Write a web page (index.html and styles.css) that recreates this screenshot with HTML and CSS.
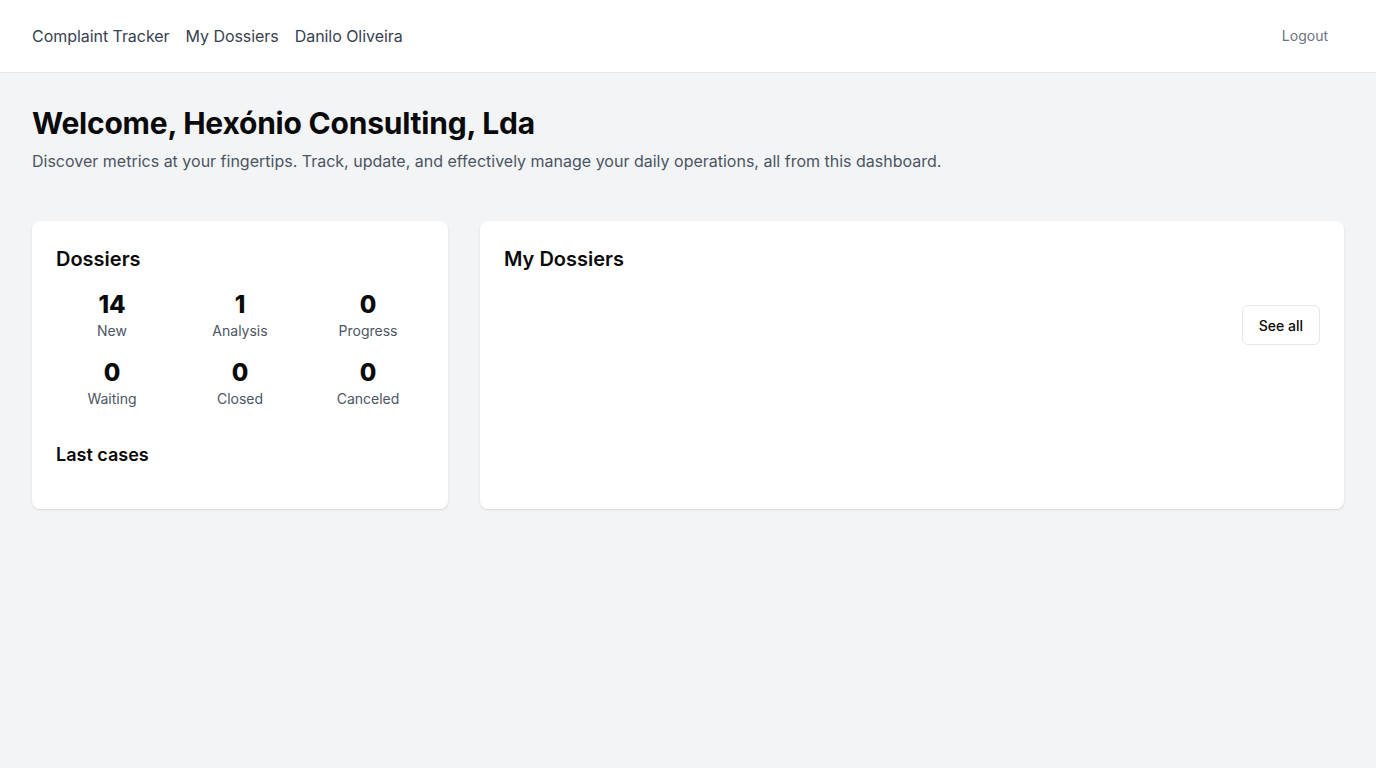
FILE: index.html
```html
<!DOCTYPE html>
<html lang="en">
<head>
<meta charset="utf-8">
<title>Complaint Tracker</title>
<link rel="stylesheet" href="styles.css">
</head>
<body>
<header class="topbar">
  <nav class="nav-links">
    <a href="#" class="nav-link">Complaint Tracker</a>
    <a href="#" class="nav-link">My Dossiers</a>
    <a href="#" class="nav-link">Danilo Oliveira</a>
  </nav>
  <button class="logout">Logout</button>
</header>
<main class="main">
  <h1 class="title">Welcome, Hexónio Consulting, Lda</h1>
  <p class="subtitle">Discover metrics at your fingertips. Track, update, and effectively manage your daily operations, all from this dashboard.</p>
  <section class="cards">
    <div class="card card-left">
      <h2 class="card-title">Dossiers</h2>
      <div class="stats">
        <div class="stat"><div class="stat-num">14</div><div class="stat-label">New</div></div>
        <div class="stat"><div class="stat-num">1</div><div class="stat-label">Analysis</div></div>
        <div class="stat"><div class="stat-num">0</div><div class="stat-label">Progress</div></div>
        <div class="stat"><div class="stat-num">0</div><div class="stat-label">Waiting</div></div>
        <div class="stat"><div class="stat-num">0</div><div class="stat-label">Closed</div></div>
        <div class="stat"><div class="stat-num">0</div><div class="stat-label">Canceled</div></div>
      </div>
      <h3 class="sub-title">Last cases</h3>
      <div class="case-list"></div>
    </div>
    <div class="card card-right">
      <h2 class="card-title">My Dossiers</h2>
      <div class="actions"><button class="see-all">See all</button></div>
      <div class="dossier-list"></div>
    </div>
  </section>
</main>
</body>
</html>
```
FILE: styles.css
```css
* { box-sizing: border-box; }
html, body { margin: 0; padding: 0; }
body {
  font-family: Inter, "Noto Sans", sans-serif;
  background: #f3f4f6;
  color: #111827;
  min-height: 768px;
}
.topbar {
  height: 73px;
  background: #ffffff;
  border-bottom: 1px solid #e5e7eb;
  display: flex;
  align-items: center;
  justify-content: space-between;
  padding: 0 32px;
}
.nav-links { display: flex; gap: 16px; }
.nav-link {
  color: #374151;
  text-decoration: none;
  font-size: 16px;
  line-height: 24px;
  letter-spacing: -0.05px;
}
.logout {
  background: none;
  border: none;
  font-family: inherit;
  font-size: 14px;
  line-height: 20px;
  color: #6b7280;
  padding: 8px 16px;
  cursor: pointer;
}
.main { padding: 32px; }
.title {
  margin: 0;
  font-size: 30px;
  line-height: 36px;
  font-weight: 700;
  letter-spacing: -0.22px;
  color: #0a0a0a;
}
.subtitle {
  margin: 8px 0 0;
  font-size: 16px;
  line-height: 24px;
  color: #4b5563;
}
.cards {
  margin-top: 48px;
  display: grid;
  grid-template-columns: 416px 1fr;
  gap: 32px;
  align-items: stretch;
}
.card {
  background: #ffffff;
  border-radius: 8px;
  box-shadow: 0 1px 2px rgba(0,0,0,0.06), 0 1px 3px rgba(0,0,0,0.06);
  padding: 24px;
  display: flex;
  flex-direction: column;
}
.card-title {
  margin: 0;
  font-size: 20px;
  line-height: 28px;
  font-weight: 600;
  color: #0a0a0a;
}
.stats {
  margin-top: 16px;
  display: grid;
  grid-template-columns: repeat(3, 1fr);
  gap: 16px;
}
.stat { text-align: center; }
.stat-num {
  font-size: 24px;
  line-height: 32px;
  font-weight: 800;
  color: #0a0a0a;
}
.stat-label {
  font-size: 14px;
  line-height: 20px;
  color: #4b5563;
}
.sub-title {
  margin: 32px 0 0;
  font-size: 18px;
  line-height: 28px;
  font-weight: 600;
  color: #0a0a0a;
}
.case-list { margin-top: 16px; }
.actions {
  margin-top: 32px;
  display: flex;
  justify-content: flex-end;
}
.see-all {
  height: 40px;
  padding: 0 16px;
  background: #ffffff;
  border: 1px solid #e5e7eb;
  border-radius: 6px;
  font-family: inherit;
  font-size: 14px;
  font-weight: 500;
  color: #0a0a0a;
  cursor: pointer;
}
.dossier-list { flex: 1; }
```
